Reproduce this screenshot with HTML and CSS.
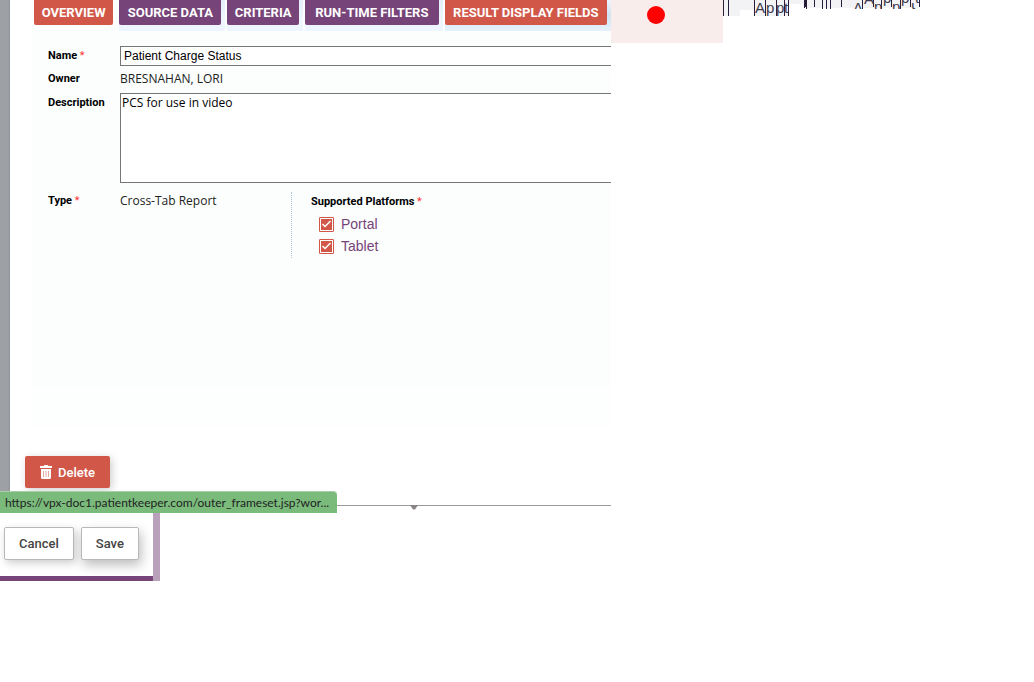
FILE: index.html
```html
<!DOCTYPE html>
<html lang="en">
<head>
<meta charset="utf-8">
<title>Patient Charge Status</title>
<link rel="stylesheet" href="styles.css">
</head>
<body>
<div class="top">
  <main class="window">
    <form class="sheet" id="report">
      <div class="panel">
        <nav class="tabs">
          <div class="tab first"><button type="button" class="tab-button active">OVERVIEW</button></div>
          <div class="tab wide"><button type="button" class="tab-button">SOURCE DATA</button></div>
          <div class="tab"><button type="button" class="tab-button">CRITERIA</button></div>
          <div class="tab widest"><button type="button" class="tab-button">RUN-TIME FILTERS</button></div>
          <div class="tab wide last"><button type="button" class="tab-button active">RESULT DISPLAY FIELDS</button></div>
        </nav>
        <div class="fields">
          <label class="label" for="name">Name <span class="required">*</span></label>
          <input class="name-input" id="name" type="text" value="Patient Charge Status">
          <span class="label">Owner</span>
          <span class="value">BRESNAHAN, LORI</span>
          <label class="label" for="description">Description</label>
          <textarea class="description" id="description">PCS for use in video</textarea>
          <span class="label">Type <span class="required">*</span></span>
          <div class="type-row">
            <span class="value type-value">Cross-Tab Report</span>
            <fieldset class="platforms">
              <legend class="label">Supported Platforms <span class="required">*</span></legend>
              <label class="option"><input class="check" type="checkbox" checked>Portal</label>
              <label class="option"><input class="check" type="checkbox" checked>Tablet</label>
            </fieldset>
          </div>
        </div>
      </div>
      <button type="button" class="delete">
        <svg width="12" height="14" viewBox="0 0 12 14" aria-hidden="true">
          <path fill="#fff" d="M0 1h3.500l1-1h3l1 1H12v2H0zM1 4h10v9l-1 1H2l-1-1z"/>
          <path stroke="#e3a79e" d="M3.500 6v6M6 6v6M8.500 6v6"/>
        </svg>
        Delete
      </button>
    </form>
    <svg class="pointer" width="8" height="5" viewBox="0 0 8 5" aria-hidden="true"><path fill="#8a8486" d="M0 0h8L5 4.500H3z"/></svg>
    <div class="status">https://vpx-doc1.patientkeeper.com/outer_frameset.jsp?wor...</div>
  </main>
  <aside class="side">
    <div class="record"><span class="dot"></span></div>
    <svg class="columns" width="200" height="16" viewBox="0 0 200 16">
      <defs>
        <clipPath id="upper"><path d="M138 0h62v6h-62z"/></clipPath>
        <clipPath id="lower"><path d="M130 3h70v6h-70z"/></clipPath>
      </defs>
      <path fill="#f3f3f6" d="M0 0h17v16H0zM17 0h14v10H17zM31 0h35v16H31zM66 0h14v4H66zM80 0h115v8H80z"/>
      <path fill="#281e3c" d="M0 0h1v16H0zM5 0h1v16H5zM31 0h1v16h-1zM42 0h1v16h-1zM53 0h1v16h-1zM61 0h1v16h-1zM65 0h1v16h-1zM81 0h3v9h-1v-2h-1v1h-1zM91 0h1v7h-1zM99 0h1v9h-1zM103 0h1v9h-1zM107 0h1v9h-1zM118 0h1v7h-1zM139 0h1v9h-1zM150 0h1v7h-1zM158 0h1v9h-1zM168 0h1v7h-1zM177 0h1v9h-1zM187 0h1v7h-1zM196 0h1v7h-1z"/>
      <g class="column-text">
        <text x="32" y="13">A</text><text x="43" y="13">p</text><text x="53" y="13">p</text><text x="61" y="13">t</text>
        <g clip-path="url(#upper)"><text x="141" y="4">A</text><text x="160" y="3">p</text><text x="178" y="3">p</text><text x="192" y="3">t</text></g>
        <g clip-path="url(#lower)"><text x="130" y="13">A</text><text x="151" y="12">p</text><text x="169" y="12">p</text><text x="188" y="9">t</text></g>
      </g>
    </svg>
  </aside>
</div>
<footer class="actions">
  <button type="submit" form="report" class="action">Cancel</button>
  <button type="submit" form="report" class="action save">Save</button>
</footer>
</body>
</html>
```

FILE: styles.css
```css
* {
  box-sizing: border-box;
}

body {
  margin: 0;
  background: #fff;
  color: #111;
  font: 12px "Open Sans", sans-serif;
}

button,
input,
textarea {
  font: inherit;
}

.top {
  display: grid;
  grid-template-columns: minmax(0, 611fr) minmax(0, 423fr);
  align-items: start;
}

.window {
  position: relative;
  border-bottom: 1px solid #999;
}

.sheet {
  padding: 0 0 17px 25px;
  overflow: hidden;
  background: linear-gradient(90deg, #9da0a4 0, #9da0a4 8px, #8f9296 10px, #fff 10px);
}

.panel {
  min-height: 427px;
  margin: 0 0 29px 7px;
  background: linear-gradient(#fbfefd 387px, #fdfffe 387px);
}

.tabs {
  display: flex;
  gap: 2px;
}

.tab {
  flex: 1 1 auto;
  padding: 0 4px 6px 0;
  background: linear-gradient(#e4effa, #eff5fe 20px);
}

.tab.first {
  flex-grow: 2;
  padding-left: 2px;
  background: none;
}

.tab.wide {
  flex-grow: 4;
}

.tab.widest {
  flex-grow: 9;
}

.tab.last {
  background: linear-gradient(#eff5fe, #cfe3f2 15px, #e8f1fb);
}

.tab-button {
  display: block;
  width: 100%;
  height: 25px;
  padding: 0 7px;
  border: 0;
  border-radius: 0 0 2px 2px;
  background: #774479;
  color: #fff;
  font: 700 13px/25px Roboto, sans-serif;
  white-space: nowrap;
}

.tab-button.active {
  background: #d15849;
}

.fields {
  display: grid;
  grid-template-columns: 72px 1fr;
  align-items: start;
  padding: 15px 0 0 16px;
}

.label {
  padding: 0;
  color: #000;
  font: 700 11px/20px Roboto, sans-serif;
}

.required {
  color: #f33;
  font-weight: 400;
}

.name-input {
  width: calc(100% + 4px);
  height: 20px;
  margin: 0 0 3px;
  padding: 0 3px;
  border: 1px solid #767676;
  background: #fff;
  color: #000;
  font: 12px "Liberation Sans", sans-serif;
}

.value {
  height: 24px;
  color: #222;
  line-height: 20px;
}

.description {
  display: block;
  width: calc(100% + 10px);
  height: 90px;
  margin-bottom: 8px;
  padding: 0 1px;
  border: 1px solid #767676;
  background: #fff;
  color: #000;
  line-height: 18px;
  resize: both;
}

.type-row {
  display: flex;
}

.type-value {
  width: 171px;
}

.platforms {
  display: flex;
  flex-direction: column;
  height: 66px;
  margin: 1px 0 0;
  padding: 0 0 0 19px;
  border: 0;
  border-left: 1px dotted #a8c8e0;
}

.platforms .label {
  float: left;
  height: 21px;
}

.option {
  display: flex;
  gap: 7px;
  align-items: center;
  height: 22px;
  padding-left: 8px;
  color: #774479;
  font: 14px "Liberation Sans", sans-serif;
}

.check {
  width: 15px;
  height: 15px;
  margin: 0;
  appearance: none;
  border: 1px solid #d15849;
  border-radius: 1px;
  outline: 1px solid #fff;
  outline-offset: -2px;
  background: #d15849;
}

.check:checked::before {
  display: block;
  width: 13px;
  height: 13px;
  background: #fff;
  clip-path: polygon(2px 7px, 3px 6px, 5px 8px, 10px 3px, 11px 4px, 5px 10px);
  content: "";
}

.delete {
  display: flex;
  gap: 6px;
  align-items: center;
  height: 32px;
  padding: 0 15px;
  border: 0;
  border-radius: 2px;
  background: #d15849;
  box-shadow: 2px 2px 8px #0003;
  color: #fff;
  font: 500 13px Roboto, sans-serif;
}

.pointer {
  position: absolute;
  top: 505px;
  left: 410px;
}

.status {
  position: absolute;
  bottom: -8px;
  left: 0;
  height: 22px;
  padding: 0 8px 0 5px;
  border-top: 1px solid #aacdaa;
  border-radius: 0 4px 0 0;
  background: #7abb7c;
  color: #222;
  font: 12px/22px Lato, sans-serif;
}

.side {
  display: flex;
  align-items: flex-start;
}

.record {
  display: flex;
  justify-content: center;
  width: 112px;
  height: 43px;
  padding: 6px 22px 0 0;
  background: #f9edeb;
}

.dot {
  width: 18px;
  height: 18px;
  border-radius: 50%;
  background: #f00;
}

.column-text {
  fill: #3e3c4c;
  font: 15px "Liberation Sans", sans-serif;
}

.actions {
  display: flex;
  gap: 7px;
  width: max-content;
  padding: 21px 14px 21px 4px;
  border-right: 7px solid #b9a0bb;
  background: linear-gradient(#774479, #774479) bottom / 100% 5px no-repeat padding-box;
}

.action {
  height: 33px;
  padding: 0 14px;
  border: 1px solid #b8b8b8;
  border-radius: 2px;
  background: #fff;
  box-shadow: 2px 3px 8px #0003;
  color: #444;
  font: 500 13px Roboto, sans-serif;
}

.save {
  box-shadow: 2px 5px 12px #0004;
}
```
